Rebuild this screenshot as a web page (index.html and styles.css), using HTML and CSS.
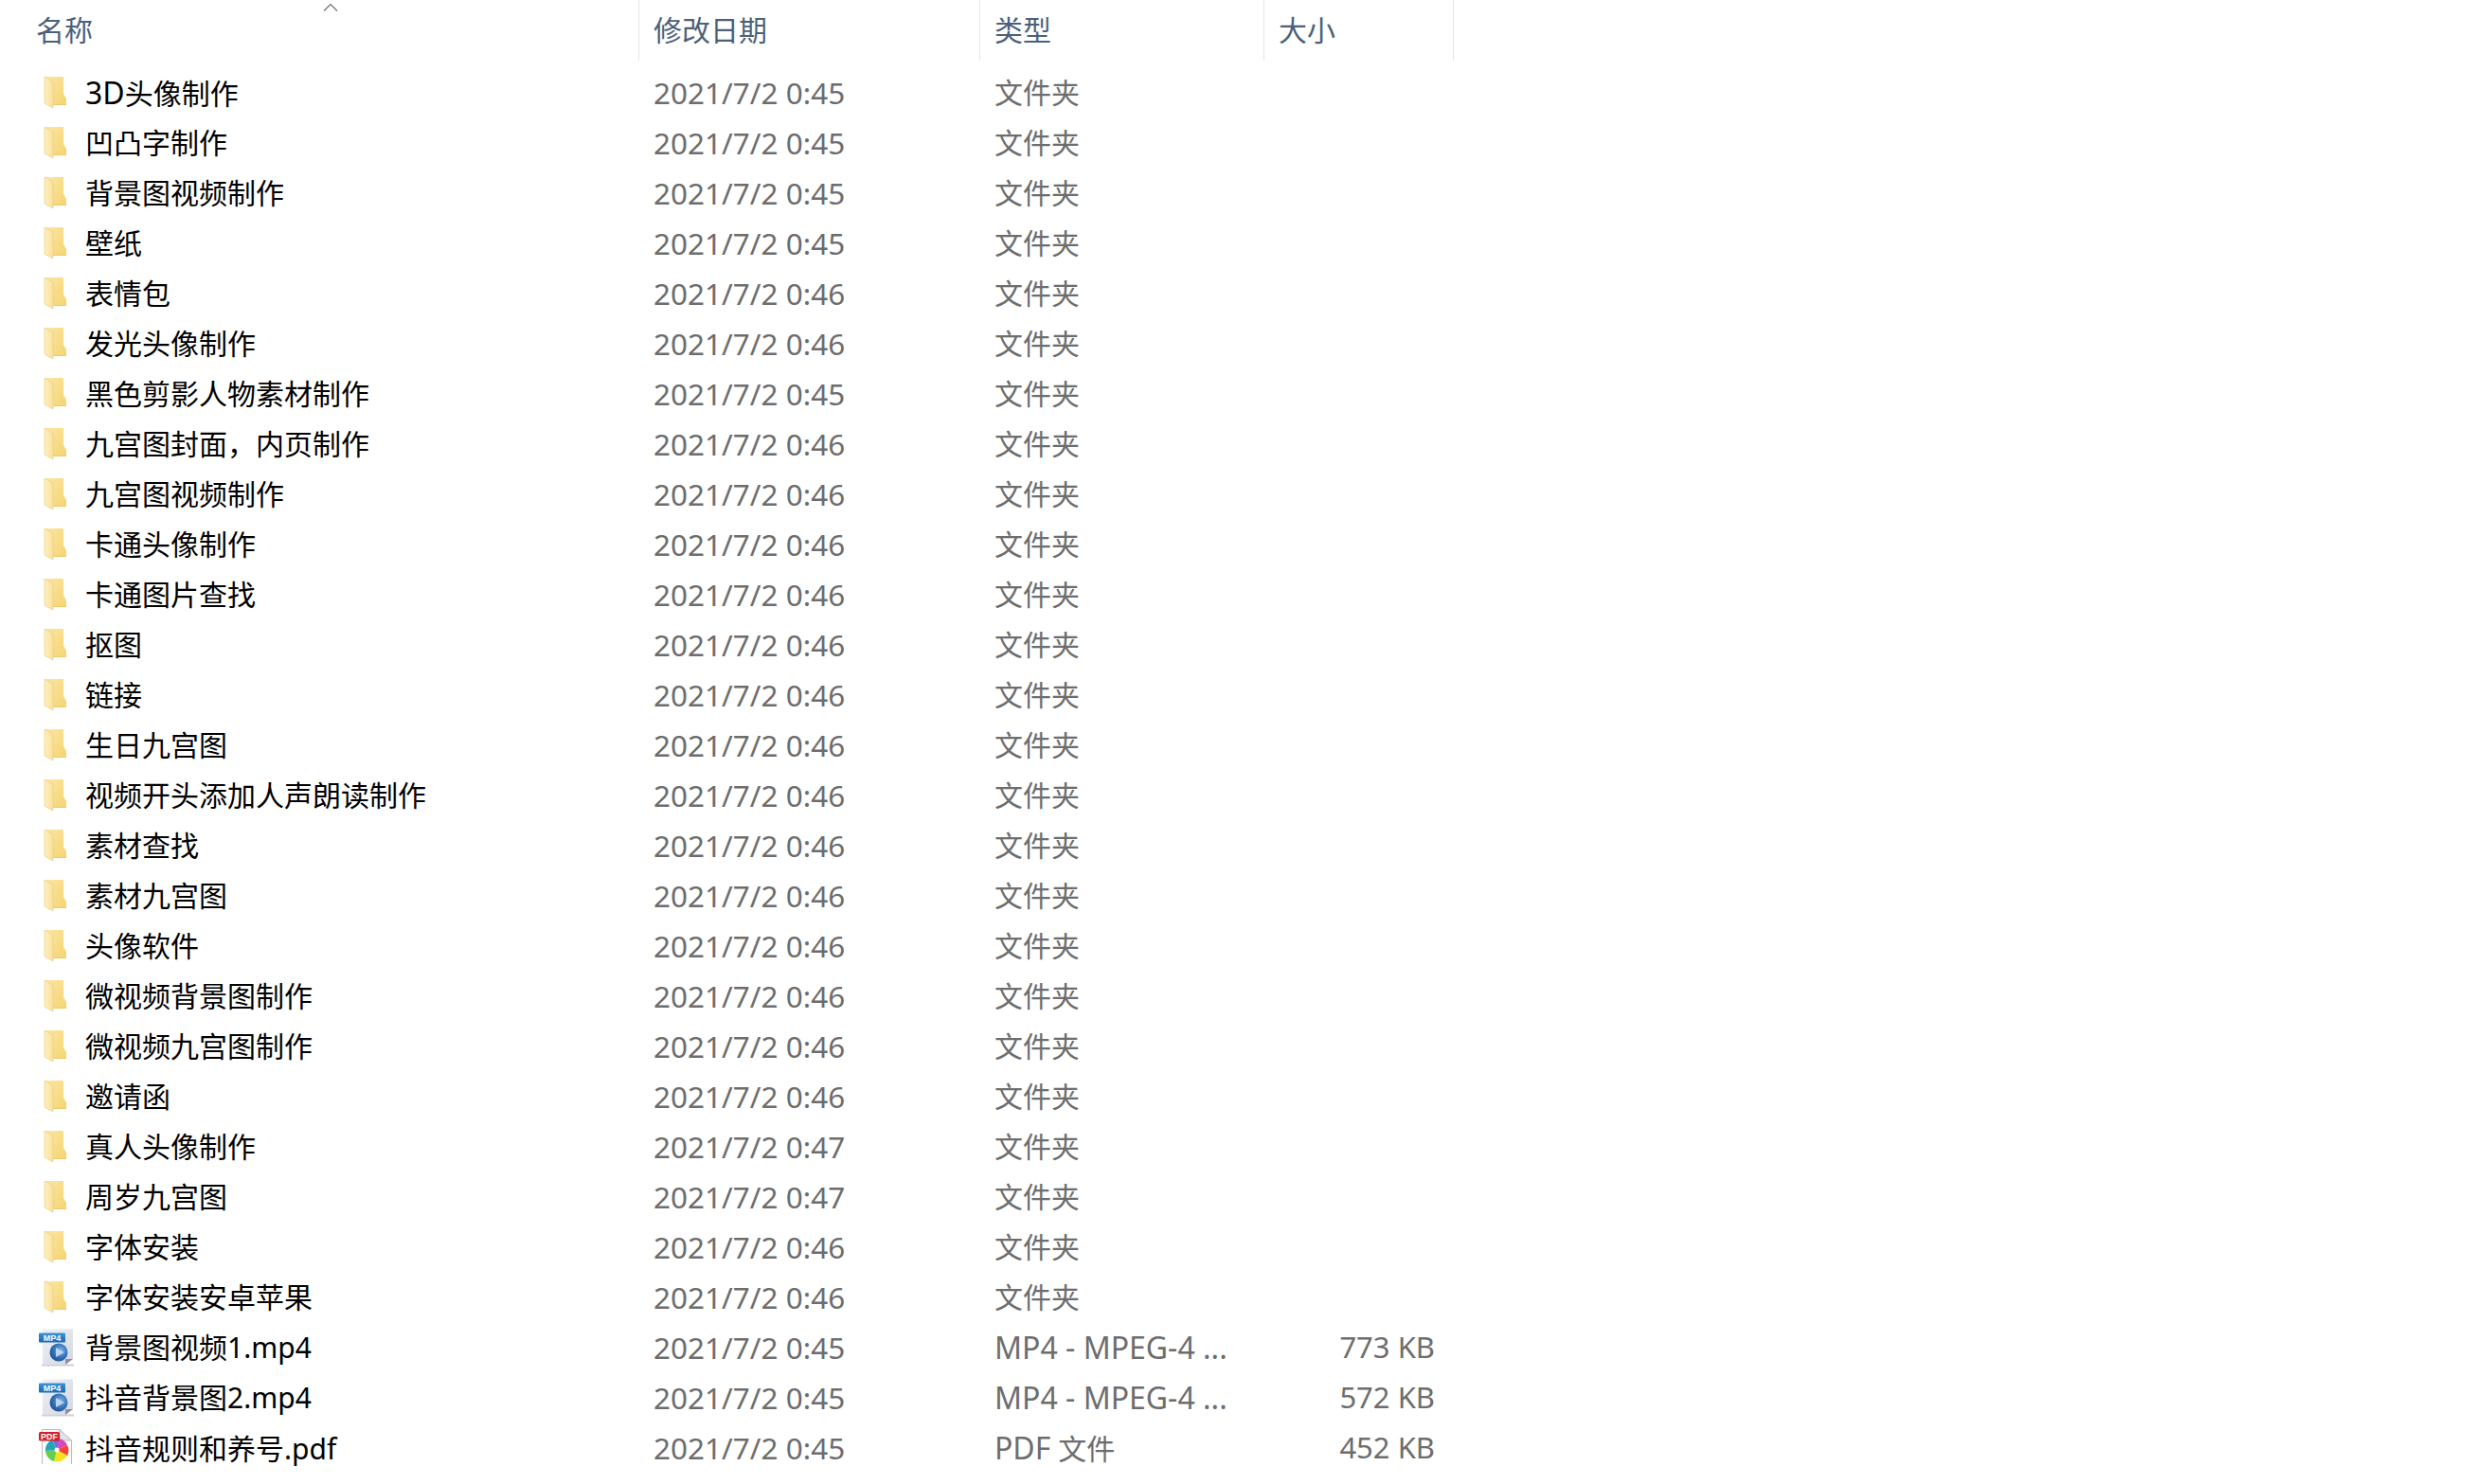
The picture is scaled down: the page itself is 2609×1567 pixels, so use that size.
FILE: index.html
```html
<!doctype html>

<html lang="zh-CN">
    <head>
        <meta charset="utf-8">
        <meta name="viewport" content="width=device-width, initial-scale=1">
        <title>文件列表</title>
        <link rel="stylesheet" href="styles.css">
    </head>

    <body>
        <svg class="iconDefs" width="0" height="0">
            <defs>
                <linearGradient id="folderBack" x1="0" y1="0" x2="1" y2="1">
                    <stop offset="0" stop-color="#fbe6a2"/>
                    <stop offset="1" stop-color="#f5d473"/>
                </linearGradient>
                <linearGradient id="folderFront" x1="0" y1="0" x2="1" y2="0">
                    <stop offset="0" stop-color="#fff1bb"/>
                    <stop offset="1" stop-color="#fae09a"/>
                </linearGradient>
                <linearGradient id="pageFill" x1="0" y1="0" x2="1" y2="1">
                    <stop offset="0" stop-color="#eef0f4"/>
                    <stop offset="1" stop-color="#d3d8e0"/>
                </linearGradient>
                <linearGradient id="labelFill" x1="0" y1="0" x2="0" y2="1">
                    <stop offset="0" stop-color="#3b93d8"/>
                    <stop offset="1" stop-color="#1a68b4"/>
                </linearGradient>
                <radialGradient id="globeFill" cx="0.6" cy="0.4" r="0.7">
                    <stop offset="0" stop-color="#7fb2e6"/>
                    <stop offset="0.6" stop-color="#2f6db5"/>
                    <stop offset="1" stop-color="#1b4a8c"/>
                </radialGradient>

                <symbol id="folder" viewBox="0 0 26 36">
                    <path fill="url(#folderBack)" d="M1 1 H21 V19 L24 24 V30 H9 Z"/>
                    <path fill="url(#folderFront)" stroke="#e8cf8c" stroke-width="0.700" d="M1 1 L10 6 V34 L1 29 Z"/>
                    <path fill="#ecca6e" d="M10 30 H24 V31 H10 Z"/>
                </symbol>

                <symbol id="video" viewBox="0 0 40 42">
                    <path fill="#ccd0d6" d="M4 38.500 H38 V40.500 H4 Z"/>
                    <path fill="url(#pageFill)" d="M5 1.500 H37 V33 L29 39 H5 Z"/>
                    <path fill="#8e9297" d="M29 39 V33 H37 Z"/>
                    <rect x="1" y="5.500" width="28" height="10" rx="1" fill="url(#labelFill)"/>
                    <text x="15" y="13.900" class="iconLabel" text-anchor="middle">MP4</text>
                    <circle cx="22" cy="26" r="9.500" fill="url(#globeFill)"/>
                    <path fill="#bcd6f2" d="M19 21 L28 26 L19 31 Z"/>
                </symbol>

                <symbol id="pdf" viewBox="0 3 40 40">
                    <path fill="#fbfbfc" stroke="#b9bcc2" stroke-width="1" d="M4.500 40 V3.500 H23 L35.500 15 V40"/>
                    <path fill="#dfe2e6" stroke="#b9bcc2" stroke-width="1" d="M23 3.500 V15 H35.500 Z"/>
                    <path fill="#8f5fd8" d="M20 25 L15 14 A12 12 0 0 1 24 13.500 Z"/>
                    <path fill="#d846b8" d="M20 25 L24 13.500 A12 12 0 0 1 31 20 Z"/>
                    <path fill="#f0433a" d="M20 25 L31 20 A12 12 0 0 1 31 31 Z"/>
                    <path fill="#f7e11f" d="M20 25 L31 31 A12 12 0 0 1 17 37 Z"/>
                    <path fill="#64cf4a" d="M20 25 L17 37 A12 12 0 0 1 8 26 Z"/>
                    <path fill="#1fa7b8" d="M20 25 L8 26 A12 12 0 0 1 15 14 Z"/>
                    <circle cx="20" cy="25" r="2.500" fill="#fff"/>
                    <rect x="1" y="6" width="22" height="9.500" rx="1.500" fill="#d3202a"/>
                    <text x="12" y="14.200" class="iconLabel" text-anchor="middle">PDF</text>
                </symbol>
            </defs>
        </svg>

        <div class="header">
            <div class="headCell nameHead">
                名称
                <svg class="sortCaret" width="16" height="10" viewBox="0 0 16 10"><path d="M1 8.500 L8 1.500 L15 8.500" fill="none" stroke="#6f6f6f" stroke-width="1.200"/></svg>
            </div>
            <div class="headCell">修改日期</div>
            <div class="headCell">类型</div>
            <div class="headCell">大小</div>
        </div>

        <div class="fileList">
            <div class="row"><div class="nameCell"><svg class="folderIcon"><use href="#folder"/></svg><span><span class="latinText">3D</span>头像制作</span></div><div class="cell dateCell">2021/7/2 0:45</div><div class="cell">文件夹</div><div class="cell sizeCell"></div></div>
            <div class="row"><div class="nameCell"><svg class="folderIcon"><use href="#folder"/></svg>凹凸字制作</div><div class="cell dateCell">2021/7/2 0:45</div><div class="cell">文件夹</div><div class="cell sizeCell"></div></div>
            <div class="row"><div class="nameCell"><svg class="folderIcon"><use href="#folder"/></svg>背景图视频制作</div><div class="cell dateCell">2021/7/2 0:45</div><div class="cell">文件夹</div><div class="cell sizeCell"></div></div>
            <div class="row"><div class="nameCell"><svg class="folderIcon"><use href="#folder"/></svg>壁纸</div><div class="cell dateCell">2021/7/2 0:45</div><div class="cell">文件夹</div><div class="cell sizeCell"></div></div>
            <div class="row"><div class="nameCell"><svg class="folderIcon"><use href="#folder"/></svg>表情包</div><div class="cell dateCell">2021/7/2 0:46</div><div class="cell">文件夹</div><div class="cell sizeCell"></div></div>
            <div class="row"><div class="nameCell"><svg class="folderIcon"><use href="#folder"/></svg>发光头像制作</div><div class="cell dateCell">2021/7/2 0:46</div><div class="cell">文件夹</div><div class="cell sizeCell"></div></div>
            <div class="row"><div class="nameCell"><svg class="folderIcon"><use href="#folder"/></svg>黑色剪影人物素材制作</div><div class="cell dateCell">2021/7/2 0:45</div><div class="cell">文件夹</div><div class="cell sizeCell"></div></div>
            <div class="row"><div class="nameCell"><svg class="folderIcon"><use href="#folder"/></svg>九宫图封面，内页制作</div><div class="cell dateCell">2021/7/2 0:46</div><div class="cell">文件夹</div><div class="cell sizeCell"></div></div>
            <div class="row"><div class="nameCell"><svg class="folderIcon"><use href="#folder"/></svg>九宫图视频制作</div><div class="cell dateCell">2021/7/2 0:46</div><div class="cell">文件夹</div><div class="cell sizeCell"></div></div>
            <div class="row"><div class="nameCell"><svg class="folderIcon"><use href="#folder"/></svg>卡通头像制作</div><div class="cell dateCell">2021/7/2 0:46</div><div class="cell">文件夹</div><div class="cell sizeCell"></div></div>
            <div class="row"><div class="nameCell"><svg class="folderIcon"><use href="#folder"/></svg>卡通图片查找</div><div class="cell dateCell">2021/7/2 0:46</div><div class="cell">文件夹</div><div class="cell sizeCell"></div></div>
            <div class="row"><div class="nameCell"><svg class="folderIcon"><use href="#folder"/></svg>抠图</div><div class="cell dateCell">2021/7/2 0:46</div><div class="cell">文件夹</div><div class="cell sizeCell"></div></div>
            <div class="row"><div class="nameCell"><svg class="folderIcon"><use href="#folder"/></svg>链接</div><div class="cell dateCell">2021/7/2 0:46</div><div class="cell">文件夹</div><div class="cell sizeCell"></div></div>
            <div class="row"><div class="nameCell"><svg class="folderIcon"><use href="#folder"/></svg>生日九宫图</div><div class="cell dateCell">2021/7/2 0:46</div><div class="cell">文件夹</div><div class="cell sizeCell"></div></div>
            <div class="row"><div class="nameCell"><svg class="folderIcon"><use href="#folder"/></svg>视频开头添加人声朗读制作</div><div class="cell dateCell">2021/7/2 0:46</div><div class="cell">文件夹</div><div class="cell sizeCell"></div></div>
            <div class="row"><div class="nameCell"><svg class="folderIcon"><use href="#folder"/></svg>素材查找</div><div class="cell dateCell">2021/7/2 0:46</div><div class="cell">文件夹</div><div class="cell sizeCell"></div></div>
            <div class="row"><div class="nameCell"><svg class="folderIcon"><use href="#folder"/></svg>素材九宫图</div><div class="cell dateCell">2021/7/2 0:46</div><div class="cell">文件夹</div><div class="cell sizeCell"></div></div>
            <div class="row"><div class="nameCell"><svg class="folderIcon"><use href="#folder"/></svg>头像软件</div><div class="cell dateCell">2021/7/2 0:46</div><div class="cell">文件夹</div><div class="cell sizeCell"></div></div>
            <div class="row"><div class="nameCell"><svg class="folderIcon"><use href="#folder"/></svg>微视频背景图制作</div><div class="cell dateCell">2021/7/2 0:46</div><div class="cell">文件夹</div><div class="cell sizeCell"></div></div>
            <div class="row"><div class="nameCell"><svg class="folderIcon"><use href="#folder"/></svg>微视频九宫图制作</div><div class="cell dateCell">2021/7/2 0:46</div><div class="cell">文件夹</div><div class="cell sizeCell"></div></div>
            <div class="row"><div class="nameCell"><svg class="folderIcon"><use href="#folder"/></svg>邀请函</div><div class="cell dateCell">2021/7/2 0:46</div><div class="cell">文件夹</div><div class="cell sizeCell"></div></div>
            <div class="row"><div class="nameCell"><svg class="folderIcon"><use href="#folder"/></svg>真人头像制作</div><div class="cell dateCell">2021/7/2 0:47</div><div class="cell">文件夹</div><div class="cell sizeCell"></div></div>
            <div class="row"><div class="nameCell"><svg class="folderIcon"><use href="#folder"/></svg>周岁九宫图</div><div class="cell dateCell">2021/7/2 0:47</div><div class="cell">文件夹</div><div class="cell sizeCell"></div></div>
            <div class="row"><div class="nameCell"><svg class="folderIcon"><use href="#folder"/></svg>字体安装</div><div class="cell dateCell">2021/7/2 0:46</div><div class="cell">文件夹</div><div class="cell sizeCell"></div></div>
            <div class="row"><div class="nameCell"><svg class="folderIcon"><use href="#folder"/></svg>字体安装安卓苹果</div><div class="cell dateCell">2021/7/2 0:46</div><div class="cell">文件夹</div><div class="cell sizeCell"></div></div>
            <div class="row"><div class="nameCell"><svg class="fileIcon"><use href="#video"/></svg>背景图视频1.mp4</div><div class="cell dateCell">2021/7/2 0:45</div><div class="cell latinText">MP4 - MPEG-4 ...</div><div class="cell sizeCell">773 KB</div></div>
            <div class="row"><div class="nameCell"><svg class="fileIcon"><use href="#video"/></svg>抖音背景图2.mp4</div><div class="cell dateCell">2021/7/2 0:45</div><div class="cell latinText">MP4 - MPEG-4 ...</div><div class="cell sizeCell">572 KB</div></div>
            <div class="row"><div class="nameCell"><svg class="fileIcon"><use href="#pdf"/></svg>抖音规则和养号.pdf</div><div class="cell dateCell">2021/7/2 0:45</div><div class="cell"><span class="latinText">PDF</span> 文件</div><div class="cell sizeCell">452 KB</div></div>
        </div>
    </body>
</html>
```

FILE: styles.css
```css
body {
    margin: 0;
    height: 1567px;
    overflow: hidden;
    background: #fff;
    color: #000;
    font-family: "Noto Sans", "Noto Sans CJK SC", sans-serif;
    font-size: 30px;
}

.iconDefs {
    display: block;
}

.iconLabel {
    fill: #fff;
    font-family: "Liberation Sans", sans-serif;
    font-size: 9px;
    font-weight: 700;
}

.header,
.row {
    display: grid;
    grid-template-columns: 675px 360px 300px 200px;
}

.header {
    margin-bottom: 7px;
}

.headCell {
    position: relative;
    height: 64px;
    line-height: 64px;
    padding-left: 15px;
    border-right: 1px solid #e5e5e5;
    color: #4c607a;
}

.nameHead {
    padding-left: 38px;
}

.sortCaret {
    position: absolute;
    top: 3px;
    left: 341px;
}

.row {
    height: 53px;
    line-height: 53px;
    white-space: nowrap;
}

.nameCell {
    display: flex;
    align-items: center;
}

.folderIcon {
    width: 26px;
    height: 36px;
    margin-left: 46px;
    margin-right: 18px;
}

.fileIcon {
    width: 40px;
    height: 42px;
    margin-left: 40px;
    margin-right: 10px;
}

.cell {
    padding-left: 15px;
    color: #6d6d6d;
}

.dateCell {
    font-size: 31.5px;
}

.latinText {
    font-size: 32px;
}

.sizeCell {
    padding-right: 20px;
    font-size: 31px;
    text-align: right;
}
```
